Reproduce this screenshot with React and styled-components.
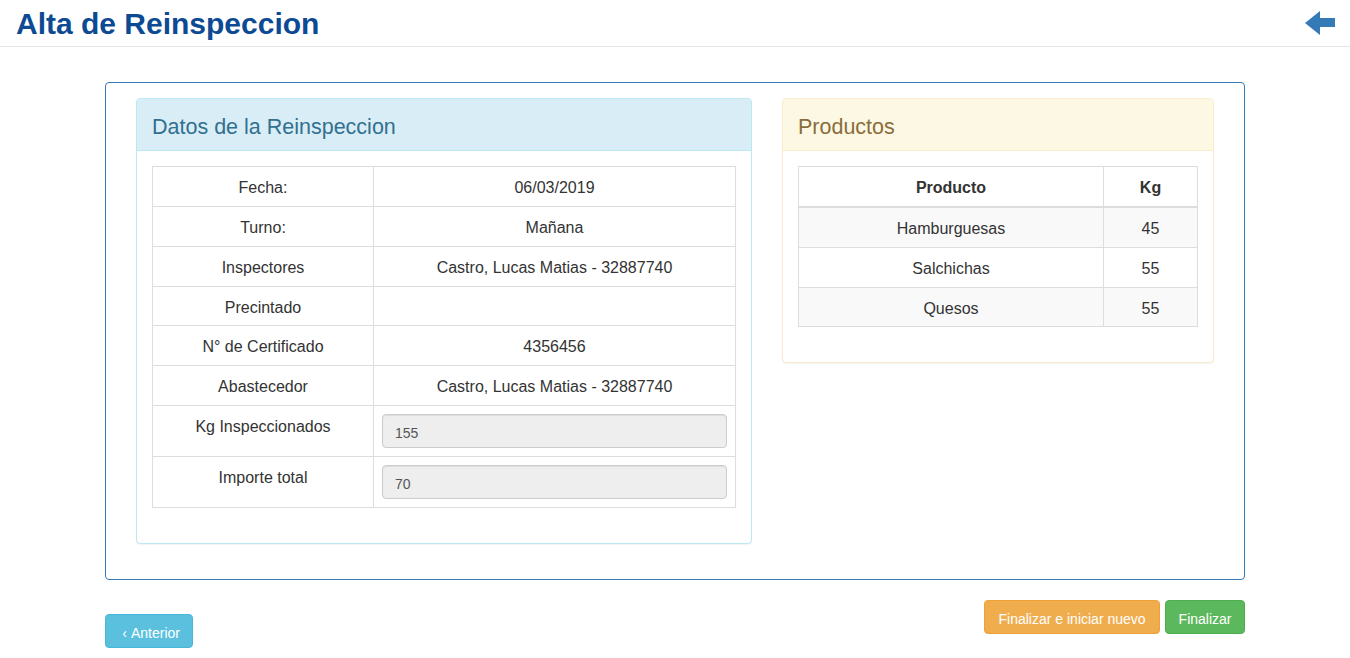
import React from "react";
import styled, { createGlobalStyle } from "styled-components";

const GlobalStyle = createGlobalStyle`
  * { box-sizing: border-box; }
  body {
    margin: 0;
    font-family: "Liberation Sans", Arial, sans-serif;
    font-size: 14px;
    color: #333;
    background: #fff;
  }
`;

const Header = styled.header`
  height: 47px;
  padding: 0 15px 0 16px;
  display: flex;
  align-items: center;
  justify-content: space-between;
  border-bottom: 1px solid #e5e5e5;
`;

const Title = styled.h1`
  margin: 0;
  padding-top: 2px;
  font-size: 30px;
  line-height: 1;
  font-weight: bold;
  color: #0c4a94;
`;

const BackLink = styled.a`
  display: flex;
  color: #337ab7;
  cursor: pointer;
`;

const Box = styled.div`
  width: 1140px;
  margin: 35px auto 0;
  border: 1px solid #337ab7;
  border-radius: 4px;
  padding: 15px 30px;
  display: grid;
  grid-template-columns: 616px 432px;
  column-gap: 30px;
  align-items: start;
`;

const palette = {
  info: { bg: "#d9edf7", border: "#bce8f1", text: "#31708f" },
  warning: { bg: "#fcf8e3", border: "#faebcc", text: "#8a6d3b" },
};

const Panel = styled.section`
  margin-bottom: 20px;
  border: 1px solid ${(p) => palette[p.$kind].border};
  border-radius: 4px;
  box-shadow: 0 1px 1px rgba(0, 0, 0, 0.05);
  background: #fff;
`;

const PanelHeading = styled.div`
  padding: 17px 15px 12px;
  background: ${(p) => palette[p.$kind].bg};
  border-bottom: 1px solid ${(p) => palette[p.$kind].border};
  border-radius: 3px 3px 0 0;
  color: ${(p) => palette[p.$kind].text};
`;

const PanelTitle = styled.h3`
  margin: 0;
  font-size: 21.5px;
  font-weight: normal;
  line-height: 22px;
`;

const PanelBody = styled.div`
  padding: 15px;
`;

const Table = styled.table`
  width: 100%;
  border-collapse: collapse;
  margin-bottom: 20px;
  font-size: 16px;
  line-height: 1.42857;
`;

const Cell = styled.td`
  border: 1px solid #ddd;
  padding: 10px 8px 6px;
  text-align: center;
  vertical-align: top;
  width: ${(p) => p.$width || "auto"};
`;

const InputCell = styled.td`
  border: 1px solid #ddd;
  padding: 8px;
  vertical-align: top;
`;

const HeadCell = styled.th`
  border: 1px solid #ddd;
  border-bottom-width: 2px;
  padding: 10px 8px 6px;
  text-align: center;
  vertical-align: bottom;
  font-weight: bold;
  width: ${(p) => p.$width || "auto"};
`;

const StripedRow = styled.tr`
  &:nth-child(odd) {
    background: #f9f9f9;
  }
`;

const ReadOnlyInput = styled.input`
  display: block;
  width: 100%;
  height: 34px;
  padding: 8px 12px 4px;
  font-family: inherit;
  font-size: 14px;
  color: #555;
  background: #eee;
  border: 1px solid #ccc;
  border-radius: 4px;
  box-shadow: inset 0 1px 1px rgba(0, 0, 0, 0.075);
  outline: none;
`;

const Footer = styled.div`
  width: 1140px;
  margin: 20px auto;
  display: flex;
  justify-content: space-between;
  align-items: flex-start;
`;

const btnColors = {
  info: { bg: "#5bc0de", border: "#46b8da" },
  warning: { bg: "#f0ad4e", border: "#eea236" },
  success: { bg: "#5cb85c", border: "#4cae4c" },
};

const Button = styled.button`
  height: 34px;
  padding: 8px ${(p) => p.$padX || 12}px 4px;
  font-family: inherit;
  font-size: 14px;
  line-height: 20px;
  color: #fff;
  background: ${(p) => btnColors[p.$variant].bg};
  border: 1px solid ${(p) => btnColors[p.$variant].border};
  border-radius: 4px;
  cursor: pointer;
  display: inline-flex;
  align-items: center;
  margin-top: ${(p) => p.$offset || 0}px;
`;

const ButtonGroup = styled.div`
  display: flex;
  gap: 5px;
`;

const Chevron = styled.span`
  display: inline-block;
  width: 13px;
  font-size: 14px;
`;

const datos = [
  ["Fecha:", "06/03/2019"],
  ["Turno:", "Mañana"],
  ["Inspectores", "Castro, Lucas Matias - 32887740"],
  ["Precintado", ""],
  ["N° de Certificado", "4356456"],
  ["Abastecedor", "Castro, Lucas Matias - 32887740"],
];

const inputs = [
  ["Kg Inspeccionados", "155"],
  ["Importe total", "70"],
];

const productos = [
  ["Hamburguesas", 45],
  ["Salchichas", 55],
  ["Quesos", 55],
];

export default function App() {
  return (
    <>
      <GlobalStyle />
      <Header>
        <Title>Alta de Reinspeccion</Title>
        <BackLink title="Volver">
          <svg width="30" height="24" viewBox="0 0 30 24">
            <path d="M0 12 L15 0 L15 7 L30 7 L30 16 L15 16 L15 24 Z" fill="currentColor" />
          </svg>
        </BackLink>
      </Header>

      <Box>
        <Panel $kind="info">
          <PanelHeading $kind="info">
            <PanelTitle>Datos de la Reinspeccion</PanelTitle>
          </PanelHeading>
          <PanelBody>
            <Table>
              <tbody>
                {datos.map(([label, value]) => (
                  <tr key={label}>
                    <Cell $width="221px">{label}</Cell>
                    <Cell>{value}</Cell>
                  </tr>
                ))}
                {inputs.map(([label, value]) => (
                  <tr key={label}>
                    <Cell $width="221px">{label}</Cell>
                    <InputCell>
                      <ReadOnlyInput type="text" value={value} readOnly />
                    </InputCell>
                  </tr>
                ))}
              </tbody>
            </Table>
          </PanelBody>
        </Panel>

        <Panel $kind="warning">
          <PanelHeading $kind="warning">
            <PanelTitle>Productos</PanelTitle>
          </PanelHeading>
          <PanelBody>
            <Table>
              <thead>
                <tr>
                  <HeadCell>Producto</HeadCell>
                  <HeadCell $width="94px">Kg</HeadCell>
                </tr>
              </thead>
              <tbody>
                {productos.map(([nombre, kg]) => (
                  <StripedRow key={nombre}>
                    <Cell>{nombre}</Cell>
                    <Cell>{kg}</Cell>
                  </StripedRow>
                ))}
              </tbody>
            </Table>
          </PanelBody>
        </Panel>
      </Box>

      <Footer>
        <Button $variant="info" $offset={14}>
          <Chevron>‹</Chevron>Anterior
        </Button>
        <ButtonGroup>
          <Button $variant="warning" $padX={13.5}>Finalizar e iniciar nuevo</Button>
          <Button $variant="success" $padX={12.5}>Finalizar</Button>
        </ButtonGroup>
      </Footer>
    </>
  );
}
